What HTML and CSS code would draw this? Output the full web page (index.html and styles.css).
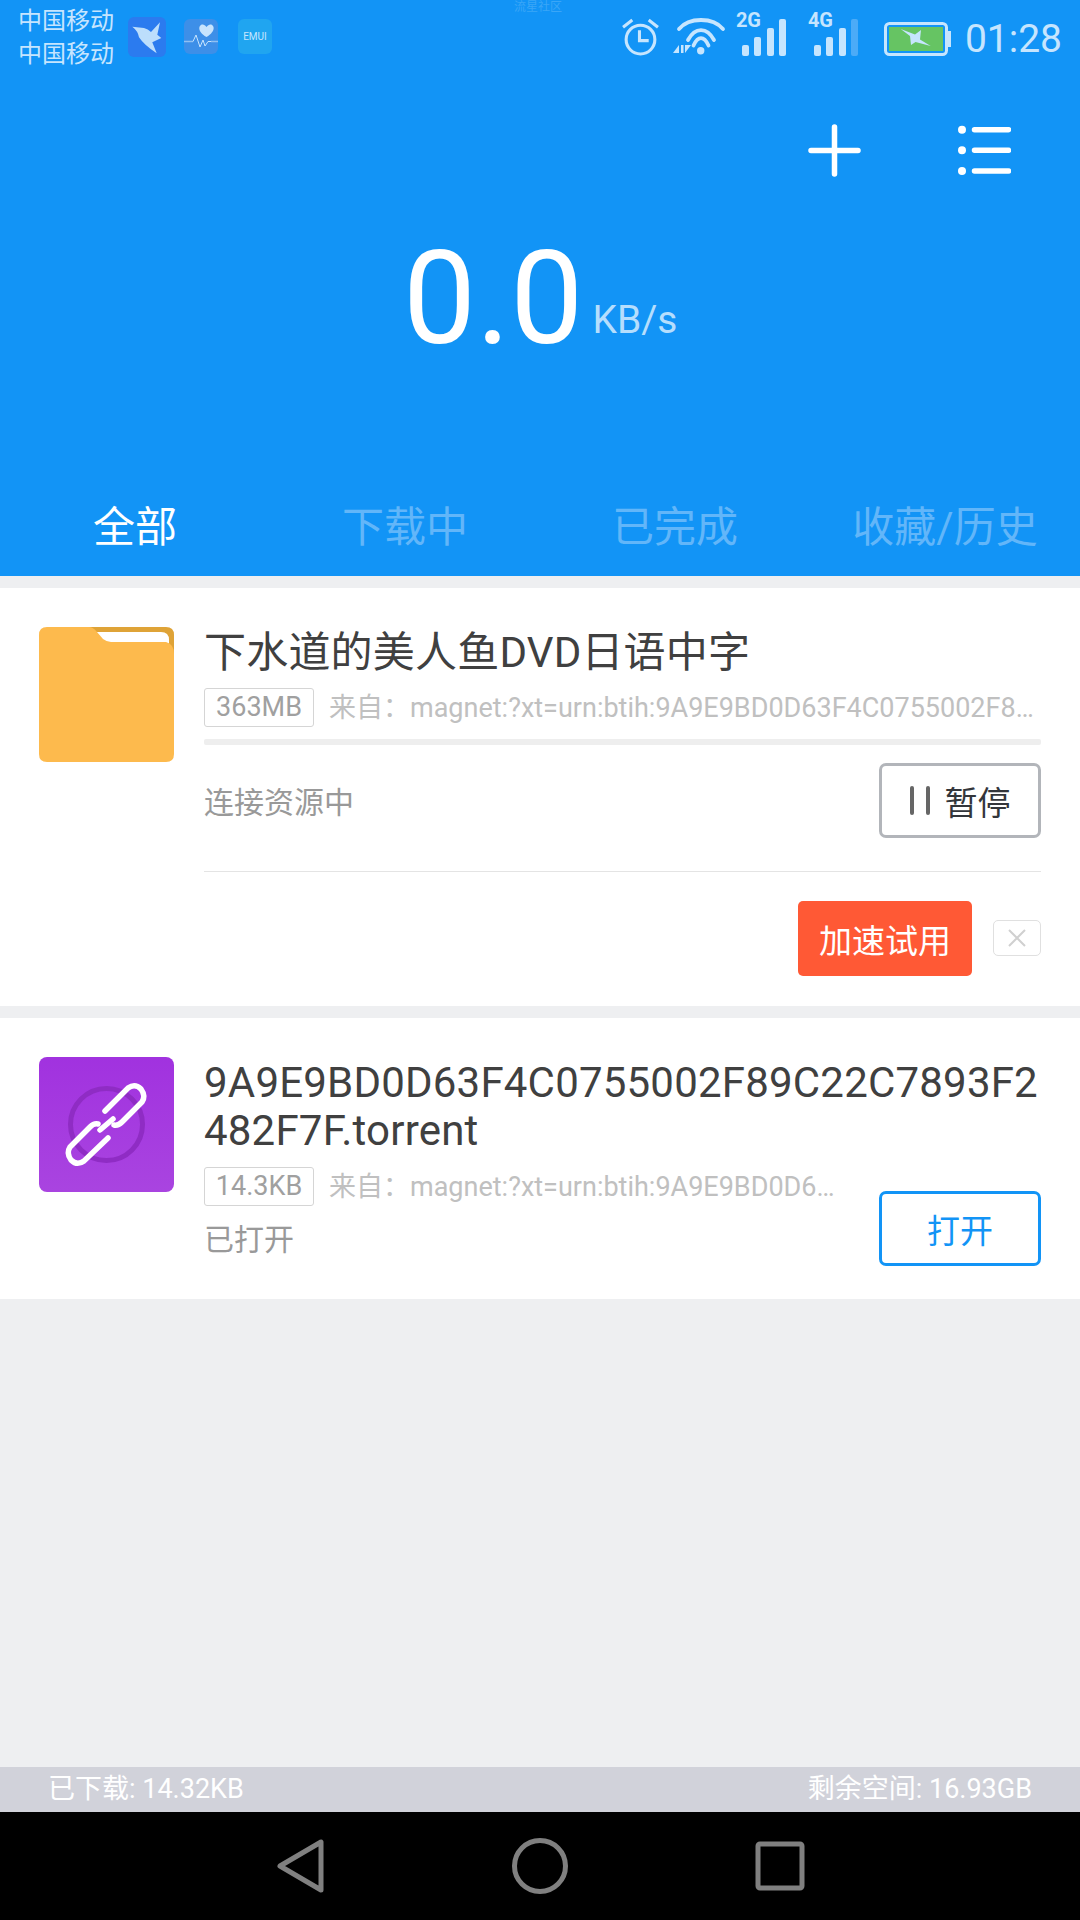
FILE: index.html
```html
<!DOCTYPE html>
<html lang="zh-CN">
<head>
  <meta charset="UTF-8" />
  <title>下载</title>
  <link rel="stylesheet" href="styles.css">
</head>
<body>
  <div class="header">
    <div class="status-bar">
      <div class="carrier"><span>中国移动</span><span>中国移动</span></div>
      <svg class="app-icon app-bird" viewBox="0 0 38 40">
        <rect width="38" height="40" rx="6" fill="#2b7bef"/>
        <path d="M4.300 9.700 L16 11 Q20 12 23 15 L32 5.300 L29.300 17.700 L33.300 21 L24.300 25.300 L28.700 36.300 Q16 28 11 20.300 Q10 14 4.300 9.700 Z" fill="#bcdefc"/>
      </svg>
      <svg class="app-icon app-health" viewBox="0 0 34 35">
        <rect width="34" height="35" rx="6" fill="#3d8fe8"/>
        <path d="M22.500 18 C12 12 15 5 19 5.500 Q21.500 6 22.500 8 Q23.500 6 26 5.500 C30 5 33 12 22.500 18 Z" fill="#c6e3fd"/>
        <path d="M0 22.500 H9 M27 22.500 H34" fill="none" stroke="#8fc0f2" stroke-width="1.500"/>
        <path d="M9 22.500 L12 16 L16 28 L19 21 L21 27 L24 22.500 H27" fill="none" stroke="#c6e3fd" stroke-width="1"/>
      </svg>
      <div class="app-icon app-emui">EMUI</div>
      <div class="spacer"></div>
      <svg class="st-alarm" viewBox="0 0 36 38">
        <circle cx="18" cy="22" r="14" fill="none" stroke="#c6e5fe" stroke-width="3"/>
        <path d="M17 13 V23 H26" fill="none" stroke="#c6e5fe" stroke-width="3"/>
        <path d="M1 10 L10 3 M26 3 L35 10" fill="none" stroke="#c6e5fe" stroke-width="3"/>
      </svg>
      <svg class="st-wifi" viewBox="0 0 55 38">
        <path d="M8 11 C18 -1 42 -1 52 11 M17 22 C24 8.700 36 8.700 43 22 M22.500 27.500 C27 17.700 33 17.700 37.500 27.500" fill="none" stroke="#c6e5fe" stroke-width="3.800" stroke-linecap="round"/>
        <circle cx="29.700" cy="32.700" r="3.700" fill="#c6e5fe"/>
        <path d="M2 35 L8 27 V35 Z M10 27 H12.500 V35 H10 Z M14 27 H20 L14 35 Z" fill="#c6e5fe"/>
      </svg>
      <div class="signal">
        <span class="net">2G</span>
        <div class="bars"><i class="b1"></i><i class="b2"></i><i class="b3"></i><i class="b4"></i></div>
      </div>
      <div class="signal signal-4g">
        <span class="net">4G</span>
        <div class="bars"><i class="b1"></i><i class="b2"></i><i class="b3"></i><i class="b4 dim"></i></div>
      </div>
      <svg class="st-battery" viewBox="0 0 67 34">
        <rect x="1.500" y="1.500" width="61" height="31" rx="4" fill="none" stroke="#c6e5fe" stroke-width="3"/>
        <rect x="5" y="5" width="54" height="24" fill="#66c463"/>
        <rect x="64" y="9" width="3" height="16" fill="#c6e5fe"/>
        <path d="M16.700 7 L31 12.500 L37 8 L36 17.500 L46.700 24 L31.500 20 L27 23 L26 14 Z" fill="#c6e5fe"/>
      </svg>
      <span class="clock">01:28</span>
    </div>
    <div class="watermark">流星社区</div>

    <div class="actions">
      <svg class="action-icon" viewBox="0 0 53 53">
        <path d="M26.500 3 V50 M3 26.500 H50" stroke="#fff" stroke-width="5.500" stroke-linecap="round"/>
      </svg>
      <svg class="action-icon" viewBox="0 0 53 53">
        <circle cx="4" cy="5.700" r="4" fill="#fff"/><circle cx="4" cy="26.300" r="4" fill="#fff"/><circle cx="4" cy="47" r="4" fill="#fff"/>
        <path d="M16.500 5.700 H50.500 M16.500 26.300 H50.500 M16.500 47 H50.500" stroke="#fff" stroke-width="5.500" stroke-linecap="round"/>
      </svg>
    </div>

    <div class="speed"><span class="speed-num">0.0</span><span class="speed-unit">KB/s</span></div>

    <div class="tabs">
      <div class="tab active">全部</div>
      <div class="tab">下载中</div>
      <div class="tab">已完成</div>
      <div class="tab">收藏/历史</div>
    </div>
  </div>

  <div class="list">
    <div class="card card-first">
      <svg class="file-icon" viewBox="0 0 135 135">
        <path d="M8 0 H127 Q135 0 135 8 V40 H60 Z" fill="#dfa337"/>
        <path d="M55 5 H122 Q130 5 130 13 V20 H70 Q66 20 63 16 Z" fill="#fff"/>
        <path d="M8 0 H50 Q54 0 58 5 L64 12 Q68 15 72 15 H127 Q135 17 135 27 V127 Q135 135 127 135 H8 Q0 135 0 127 V8 Q0 0 8 0 Z" fill="#fdba4d"/>
      </svg>
      <div class="card-body">
        <div class="title">下水道的美人鱼DVD日语中字</div>
        <div class="meta">
          <span class="size">363MB</span>
          <span class="from">来自：magnet:?xt=urn:btih:9A9E9BD0D63F4C0755002F8…</span>
        </div>
        <div class="progress"></div>
        <div class="state-row">
          <span class="state">连接资源中</span>
          <button class="btn btn-pause"><i class="pause-bar"></i><i class="pause-bar"></i><span>暂停</span></button>
        </div>
        <div class="divider"></div>
        <div class="promo-row">
          <button class="btn-speedup">加速试用</button>
          <button class="btn-close">
            <svg viewBox="0 0 18 18"><path d="M1 1 L17 17 M17 1 L1 17" stroke="#d0d0d0" stroke-width="2"/></svg>
          </button>
        </div>
      </div>
    </div>

    <div class="card card-second">
      <svg class="file-icon" viewBox="0 0 135 135">
        <defs>
          <linearGradient id="purple" x1="0" y1="0" x2="0" y2="1">
            <stop offset="0" stop-color="#a132df"/>
            <stop offset="1" stop-color="#a944e0"/>
          </linearGradient>
        </defs>
        <rect width="135" height="135" rx="8" fill="url(#purple)"/>
        <circle cx="67.500" cy="67.500" r="36" fill="none" stroke="#8f2cc4" stroke-width="5"/>
        <g fill="none" stroke="#fff" stroke-width="5.500" stroke-linecap="round">
          <path d="M66 54 L89 31 Q96 26 102 32 Q107 39 103 45 L83 65 Q79 69 75 68"/>
          <path d="M61 73 L74 62"/>
          <path d="M69 81 L45 104 Q38 109 32 103 Q27 96 31 90 L51 70 Q55 66 59 67"/>
        </g>
      </svg>
      <div class="card-body">
        <div class="title title-wrap">9A9E9BD0D63F4C0755002F89C22C7893F2482F7F.torrent</div>
        <div class="bottom-row">
          <div class="bottom-info">
            <div class="meta">
              <span class="size">14.3KB</span>
              <span class="from">来自：magnet:?xt=urn:btih:9A9E9BD0D6…</span>
            </div>
            <div class="state state-opened">已打开</div>
          </div>
          <button class="btn btn-open">打开</button>
        </div>
      </div>
    </div>
  </div>

  <div class="storage">
    <span>已下载: 14.32KB</span>
    <span>剩余空间: 16.93GB</span>
  </div>

  <div class="navbar">
    <svg class="nav-icon" viewBox="0 0 60 60">
      <path d="M51 6 V54 L10 30 Z" fill="none" stroke="#808080" stroke-width="5" stroke-linejoin="round"/>
    </svg>
    <svg class="nav-icon" viewBox="0 0 60 60">
      <circle cx="30" cy="30" r="25.500" fill="none" stroke="#808080" stroke-width="5"/>
    </svg>
    <svg class="nav-icon" viewBox="0 0 60 60">
      <rect x="8" y="8" width="44" height="44" rx="2" fill="none" stroke="#808080" stroke-width="5"/>
    </svg>
  </div>
</body>
</html>
```

FILE: styles.css
```css
* {
  box-sizing: border-box;
}

body {
  margin: 0;
  width: 1080px;
  height: 1920px;
  display: flex;
  flex-direction: column;
  position: relative;
  background-color: #eeeff1;
  font-family: Roboto, "Noto Sans CJK SC", sans-serif;
  overflow: hidden;
}

.header {
  height: 576px;
  background-color: #1294f6;
  display: flex;
  flex-direction: column;
  flex-shrink: 0;
}

.status-bar {
  height: 70px;
  padding: 4px 18px 0 18px;
  display: flex;
  align-items: flex-start;
  color: #c6e5fe;
}

.carrier {
  display: flex;
  flex-direction: column;
  width: 110px;
  margin-top: 1px;
  font-size: 24px;
  line-height: 33px;
}

.app-icon {
  flex-shrink: 0;
}

.app-bird {
  width: 38px;
  height: 40px;
  margin-top: 13px;
}

.app-health {
  width: 34px;
  height: 35px;
  margin-top: 15px;
  margin-left: 18px;
}

.app-emui {
  width: 34px;
  height: 35px;
  margin-top: 15px;
  margin-left: 20px;
  border-radius: 6px;
  background-color: #20a5f0;
  font-size: 10px;
  line-height: 35px;
  text-align: center;
}

.spacer {
  flex: 1;
}

.st-alarm {
  width: 37px;
  height: 39px;
  margin-top: 13px;
}

.st-wifi {
  width: 55px;
  height: 38px;
  margin-top: 14px;
  margin-left: 12px;
}

.signal {
  width: 50px;
  height: 52px;
  position: relative;
  margin-left: 10px;
}

.signal-4g {
  margin-left: 22px;
}

.net {
  position: absolute;
  left: 0;
  top: 6px;
  font-size: 20px;
  font-weight: 700;
  line-height: 20px;
}

.bars {
  position: absolute;
  left: 6px;
  bottom: 0;
  display: flex;
  align-items: flex-end;
  gap: 5.5px;
}

.bars i {
  display: block;
  width: 7px;
  border-radius: 2px;
  background-color: #c6e5fe;
}

.bars .b1 { height: 11px; }
.bars .b2 { height: 19px; }
.bars .b3 { height: 28px; }
.bars .b4 { height: 37px; }
.bars .dim { background-color: #4cabf7; }

.st-battery {
  width: 67px;
  height: 34px;
  margin-top: 18px;
  margin-left: 26px;
}

.clock {
  margin-left: 14px;
  margin-top: 12px;
  font-size: 39px;
  line-height: 46px;
}

.watermark {
  position: absolute;
  left: 514px;
  top: 0;
  font-size: 12px;
  line-height: 14px;
  color: #3aa6f7;
}

.actions {
  height: 53px;
  margin-top: 54px;
  padding-right: 69px;
  display: flex;
  justify-content: flex-end;
  gap: 97px;
}

.action-icon {
  width: 53px;
  height: 53px;
}

.speed {
  margin-top: 57px;
  padding-left: 403px;
  display: flex;
  align-items: flex-start;
  color: #fff;
}

.speed-num {
  font-size: 130px;
  line-height: 130px;
}

.speed-unit {
  margin-left: 9px;
  margin-top: 63px;
  font-size: 39px;
  line-height: 46px;
  color: #b5defd;
}

.tabs {
  margin-top: auto;
  height: 100px;
  padding-top: 3px;
  display: grid;
  grid-template-columns: repeat(4, 270px);
}

.tab {
  text-align: center;
  font-size: 42px;
  line-height: 97px;
  color: #62b6f9;
}

.tab.active {
  color: #fff;
}

.list {
  flex: 1;
  padding-top: 12px;
  display: flex;
  flex-direction: column;
  gap: 12px;
}

.card {
  background-color: #fff;
  padding: 39px 39px 0;
  display: flex;
}

.card-first {
  height: 418px;
}

.card-second {
  height: 281px;
}

.file-icon {
  width: 135px;
  height: 135px;
  flex-shrink: 0;
}

.card-body {
  flex: 1;
  min-width: 0;
  margin-left: 30px;
}

.title {
  font-size: 42px;
  line-height: 48px;
  letter-spacing: 0.2px;
  color: #404040;
  margin-top: 2px;
}

.title-wrap {
  word-break: break-all;
  margin-bottom: 1px;
}

.meta {
  margin-top: 11px;
  display: flex;
  align-items: center;
  gap: 15px;
}

.size {
  flex-shrink: 0;
  height: 39px;
  width: 110px;
  border: 1px solid #d5d5d5;
  border-radius: 3px;
  font-size: 27px;
  line-height: 37px;
  text-align: center;
  color: #a0a0a0;
}

.from {
  flex: 1;
  min-width: 0;
  padding-top: 2px;
  font-size: 27px;
  line-height: 37px;
  color: #c0c0c0;
  white-space: nowrap;
}

.progress {
  height: 6px;
  margin-top: 12px;
  background-color: #eeeeee;
  border-radius: 2px;
}

.state-row {
  margin-top: 18px;
  height: 75px;
  display: flex;
  align-items: center;
  justify-content: space-between;
}

.state {
  font-size: 30px;
  color: #999999;
}

.state-row .state {
  margin-bottom: 2px;
}

.btn {
  width: 162px;
  height: 75px;
  background: #fff;
  border-radius: 7px;
  font-family: inherit;
  font-size: 33px;
  display: flex;
  align-items: center;
  justify-content: center;
  padding: 0;
}

.btn-pause {
  border: 3px solid #b2b5ba;
  color: #33363b;
  gap: 12px;
}

.pause-bar {
  width: 4px;
  height: 29px;
  border-radius: 2px;
  background-color: #666666;
}

.pause-bar + span {
  margin-left: 3px;
}

.divider {
  height: 1px;
  margin-top: 33px;
  background-color: #e4e4e4;
}

.promo-row {
  margin-top: 29px;
  display: flex;
  align-items: center;
  justify-content: flex-end;
}

.btn-speedup {
  width: 174px;
  height: 75px;
  border: none;
  border-radius: 5px;
  background-color: #ff5935;
  color: #fff;
  font-family: inherit;
  font-size: 33px;
  padding: 0;
}

.btn-close {
  width: 48px;
  height: 36px;
  margin-left: 21px;
  margin-bottom: 2px;
  padding: 0;
  border: 1px solid #e0e0e0;
  border-radius: 5px;
  background: #fff;
  display: flex;
  align-items: center;
  justify-content: center;
}

.btn-close svg {
  width: 18px;
  height: 18px;
}

.bottom-row {
  display: flex;
  align-items: flex-end;
  justify-content: space-between;
}

.bottom-info {
  width: 632px;
}

.state-opened {
  margin-top: 12px;
  line-height: 44px;
}

.btn-open {
  border: 3px solid #1294f6;
  color: #1294f6;
  margin-bottom: -4px;
}

.storage {
  height: 45px;
  flex-shrink: 0;
  padding: 0 48px;
  display: flex;
  justify-content: space-between;
  background-color: #d1d2da;
  color: #fff;
  font-size: 27px;
  line-height: 45px;
}

.navbar {
  height: 108px;
  flex-shrink: 0;
  padding-left: 270px;
  display: grid;
  grid-template-columns: repeat(3, 240px);
  align-items: center;
  background-color: #000;
}

.nav-icon {
  width: 60px;
  height: 60px;
}
```
